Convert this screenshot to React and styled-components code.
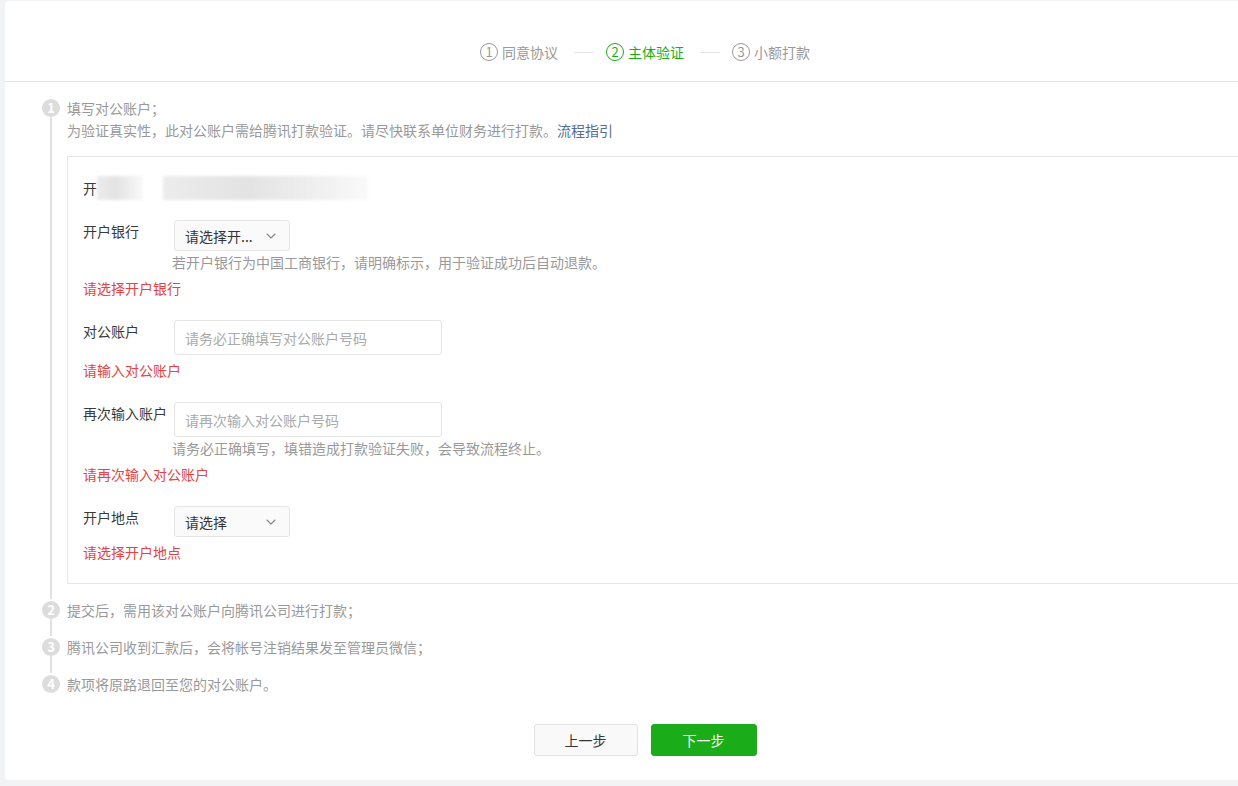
import React from 'react'
import styled, { createGlobalStyle } from 'styled-components';
import { ChevronDown } from 'lucide-react';

const GlobalStyle = createGlobalStyle`
  html, body {
    margin: 0;
    padding: 0;
    background: #f2f3f5;
    overflow: hidden;
  }
  body {
    font-family: "Noto Sans CJK SC", "Noto Sans", "Liberation Sans", sans-serif;
    font-size: 14px;
    color: #353535;
  }
`;

const Card = styled.div`
  width: 1280px;
  height: 779px;
  margin: 1px 0 0 5px;
  background: #fff;
  border-radius: 4px;
  display: flex;
  flex-direction: column;
`;

const Header = styled.div`
  height: 81px;
  border-bottom: 1px solid #e5e5e5;
  display: flex;
  align-items: center;
  justify-content: center;
  padding-top: 22px;
  box-sizing: border-box;
`;

const StepTab = styled.div`
  display: flex;
  align-items: center;
  gap: 4px;
  color: ${p => (p.active ? '#1aad19' : '#999')};
  line-height: 20px;
`;

const Num = styled.span`
  width: 16px;
  height: 16px;
  border: 1px solid currentColor;
  border-radius: 50%;
  font-size: 13px;
  line-height: 16px;
  text-align: center;
`;

const Dash = styled.span`
  width: 20px;
  height: 1px;
  background: #e5e5e5;
  margin: 0 12px 0 16px;
`;

const Timeline = styled.div`
  padding: 15px 0 0 37px;
`;

const Step = styled.div`
  display: flex;
`;

const Rail = styled.div`
  width: 25px;
  flex-shrink: 0;
  display: flex;
  flex-direction: column;
  padding-top: 2px;
`;

const Dot = styled.span`
  width: 18px;
  height: 18px;
  border-radius: 50%;
  background: #dcdcdc;
  color: #fff;
  font-size: 13px;
  font-weight: bold;
  line-height: 18px;
  text-align: center;
`;

const Line = styled.span`
  flex: 1;
  width: 2px;
  margin-left: 8px;
  background: #e2e2e2;
`;

const StepBody = styled.div`
  flex: 1;
  padding-bottom: ${p => (p.last ? 0 : 15)}px;
  color: #999;
  line-height: 22px;
`;

const Link = styled.a`
  color: #576b95;
  text-decoration: none;
`;

const FormBox = styled.div`
  margin-top: 15px;
  border: 1px solid #e7e7e7;
  border-right: none;
  padding: 20px 0 20px 15px;
  display: flex;
  flex-direction: column;
  gap: 21px;
`;

const Group = styled.div`
  display: flex;
  flex-direction: column;
  gap: 4px;
`;

const Row = styled.div`
  display: flex;
  align-items: flex-start;
`;

const Label = styled.div`
  width: ${p => (p.auto ? 'auto' : '91px')};
  flex-shrink: 0;
  color: #3a3a3a;
  line-height: 22px;
`;

const Field = styled.div`
  display: flex;
  flex-direction: column;
  align-items: flex-start;
`;

const Select = styled.div`
  width: 116px;
  height: 31px;
  box-sizing: border-box;
  border: 1px solid #e5e5e5;
  border-radius: 3px;
  background: #fafafa;
  display: flex;
  align-items: center;
  justify-content: space-between;
  padding: 0 10px 0 10px;
  color: #353535;
`;

const Input = styled.input`
  width: 268px;
  height: 35px;
  box-sizing: border-box;
  border: 1px solid #e5e5e5;
  border-radius: 3px;
  padding: 0 10px;
  font: inherit;
  color: #353535;
  outline: none;
  &::placeholder {
    color: #aaa;
  }
`;

const Hint = styled.div`
  color: #999;
  line-height: 22px;
  margin-left: -2px;
`;

const Error = styled.div`
  color: #e64340;
  line-height: 22px;
`;

const Redacted = styled.div`
  display: flex;
  align-items: center;
  height: 22px;
  gap: 20px;
`;

const Blur = styled.span`
  width: ${p => p.w}px;
  height: 24px;
  background: linear-gradient(90deg, #ececec, #e3e3e3 40%, #f1f1f1 80%, #fafafa);
  filter: blur(1.5px);
`;

const Actions = styled.div`
  display: flex;
  justify-content: center;
  gap: 13px;
  margin-top: 29px;
`;

const Button = styled.button`
  width: ${p => (p.primary ? 106 : 104)}px;
  height: 32px;
  border-radius: 3px;
  border: 1px solid ${p => (p.primary ? '#1aad19' : '#e1e1e1')};
  background: ${p => (p.primary ? '#1aad19' : '#f9f9f9')};
  color: ${p => (p.primary ? '#fff' : '#353535')};
  font: inherit;
  cursor: pointer;
`;

const Chevron = () => <ChevronDown size={16} color="#888" strokeWidth={1.6} />;

const App = () => {
    return (
        <Card>
            <GlobalStyle />
            <Header>
                <StepTab><Num>1</Num>同意协议</StepTab>
                <Dash />
                <StepTab active><Num>2</Num>主体验证</StepTab>
                <Dash />
                <StepTab><Num>3</Num>小额打款</StepTab>
            </Header>
            <Timeline>
                <Step>
                    <Rail><Dot>1</Dot><Line /></Rail>
                    <StepBody>
                        <div>填写对公账户；</div>
                        <div>为验证真实性，此对公账户需给腾讯打款验证。请尽快联系单位财务进行打款。<Link href="#">流程指引</Link></div>
                        <FormBox>
                            <Row>
                                <Label auto>开</Label>
                                <Redacted>
                                    <Blur w={46} />
                                    <Blur w={205} />
                                </Redacted>
                            </Row>
                            <Group>
                                <Row>
                                    <Label>开户银行</Label>
                                    <Field>
                                        <Select>请选择开...<Chevron /></Select>
                                        <Hint>若开户银行为中国工商银行，请明确标示，用于验证成功后自动退款。</Hint>
                                    </Field>
                                </Row>
                                <Error>请选择开户银行</Error>
                            </Group>
                            <Group>
                                <Row>
                                    <Label>对公账户</Label>
                                    <Field>
                                        <Input placeholder="请务必正确填写对公账户号码" />
                                    </Field>
                                </Row>
                                <Error>请输入对公账户</Error>
                            </Group>
                            <Group>
                                <Row>
                                    <Label>再次输入账户</Label>
                                    <Field>
                                        <Input placeholder="请再次输入对公账户号码" />
                                        <Hint>请务必正确填写，填错造成打款验证失败，会导致流程终止。</Hint>
                                    </Field>
                                </Row>
                                <Error>请再次输入对公账户</Error>
                            </Group>
                            <Group>
                                <Row>
                                    <Label>开户地点</Label>
                                    <Field>
                                        <Select>请选择<Chevron /></Select>
                                    </Field>
                                </Row>
                                <Error>请选择开户地点</Error>
                            </Group>
                        </FormBox>
                    </StepBody>
                </Step>
                <Step>
                    <Rail><Dot>2</Dot><Line /></Rail>
                    <StepBody>提交后，需用该对公账户向腾讯公司进行打款；</StepBody>
                </Step>
                <Step>
                    <Rail><Dot>3</Dot><Line /></Rail>
                    <StepBody>腾讯公司收到汇款后，会将帐号注销结果发至管理员微信；</StepBody>
                </Step>
                <Step>
                    <Rail><Dot>4</Dot></Rail>
                    <StepBody last>款项将原路退回至您的对公账户。</StepBody>
                </Step>
            </Timeline>
            <Actions>
                <Button>上一步</Button>
                <Button primary>下一步</Button>
            </Actions>
        </Card>
    )
}

export default App
